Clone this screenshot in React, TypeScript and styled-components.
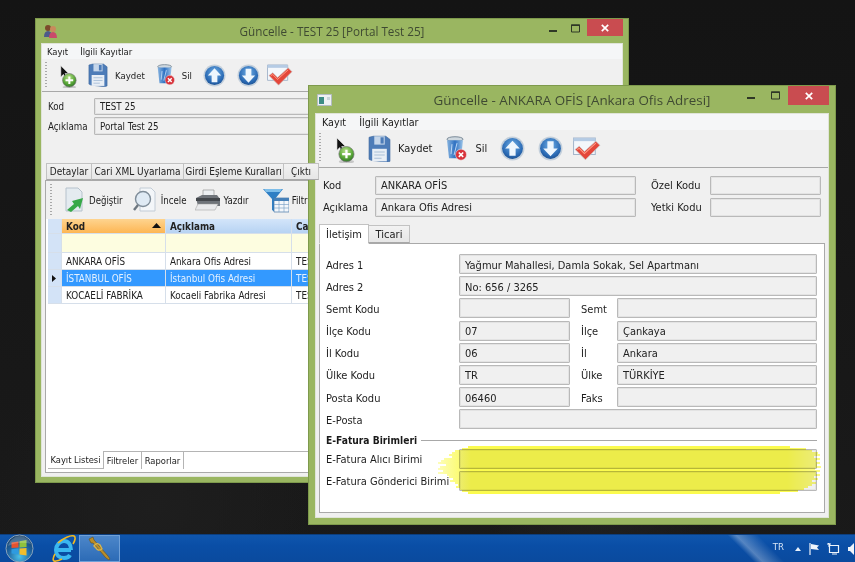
import React from "react";
import styled, { createGlobalStyle } from "styled-components";

const Global = createGlobalStyle`
  html, body { margin: 0; padding: 0; background: #151515; overflow: hidden; }
  * { box-sizing: border-box; }
  body { font-family: "DejaVu Sans Condensed", "DejaVu Sans", sans-serif; font-stretch: condensed; font-size: 11px; color: #1a1a1a; }
`;

const Desktop = styled.div`
  position: relative;
  width: 855px;
  height: 562px;
  overflow: hidden;
  background:
    radial-gradient(circle at 70% 85%, #232323 0, transparent 120px),
    radial-gradient(circle at 18% 90%, #1e1e1e 0, transparent 160px),
    linear-gradient(#141414, #1a1a1a);
  filter: blur(0.28px);
`;

const Frame = styled.div<{ $x: number; $y: number; $w: number; $h: number; $pad: number; $title: number }>`
  position: absolute;
  left: ${(p) => p.$x}px;
  top: ${(p) => p.$y}px;
  width: ${(p) => p.$w}px;
  height: ${(p) => p.$h}px;
  background: #9ab661;
  border: 1px solid #7e9a4c;
  padding: 0 ${(p) => p.$pad}px ${(p) => p.$pad}px;
  display: grid;
  grid-template-rows: ${(p) => p.$title}px 1fr;
`;

const TitleBar = styled.div<{ $size: number }>`
  position: relative;
  display: flex;
  align-items: center;
  justify-content: center;
  font-family: "Open Sans", "Noto Sans", sans-serif;
  font-stretch: normal;
  font-size: ${(p) => p.$size}px;
  color: #3f4a32;
`;

const TitleIcon = styled.span<{ $left: number }>`
  position: absolute;
  left: ${(p) => p.$left}px;
  top: 50%;
  transform: translateY(-50%);
  display: flex;
`;

const Controls = styled.div`
  position: absolute;
  right: 0;
  top: 0;
  display: flex;
  align-items: flex-start;
`;

const ControlGlyph = styled.span<{ $w: number; $low?: boolean }>`
  width: ${(p) => p.$w}px;
  height: 19px;
  padding-top: ${(p) => (p.$low ? 5 : 0)}px;
  display: flex;
  align-items: center;
  justify-content: center;
`;

const Close = styled.span<{ $w: number; $h: number }>`
  width: ${(p) => p.$w}px;
  height: ${(p) => p.$h}px;
  background: #c94c50;
  display: flex;
  align-items: center;
  justify-content: center;
`;

const Client = styled.div`
  background: #f0f0f0;
  border: 1px solid #dfe4d8;
  display: flex;
  flex-direction: column;
  min-height: 0;
  overflow: hidden;
`;

const MenuBar = styled.div<{ $h: number; $size: number; $left: number; $gap: number }>`
  height: ${(p) => p.$h}px;
  flex: none;
  background: #f5f6f7;
  display: flex;
  align-items: center;
  gap: ${(p) => p.$gap}px;
  padding-left: ${(p) => p.$left}px;
  font-size: ${(p) => p.$size}px;
`;

const Toolbar = styled.div<{ $h: number; $size: number; $line?: boolean }>`
  position: relative;
  height: ${(p) => p.$h}px;
  flex: none;
  display: flex;
  align-items: center;
  font-size: ${(p) => p.$size}px;
  background: #f0f0f0;
  border-bottom: ${(p) => (p.$line ? "1px solid #a8a8a8" : "none")};
`;

const Grip = styled.span<{ $left: number }>`
  position: absolute;
  left: ${(p) => p.$left}px;
  top: 3px;
  bottom: 4px;
  width: 2px;
  background-image: linear-gradient(#a9a9a9 1px, transparent 1px);
  background-size: 2px 3px;
`;

const Tool = styled.span<{ $ml: number; $mt?: number }>`
  display: inline-flex;
  flex: none;
  align-items: center;
  margin-left: ${(p) => p.$ml}px;
  margin-top: ${(p) => p.$mt ?? 0}px;
`;

const ToolLabel = styled.span<{ $ml: number }>`
  flex: none;
  margin-left: ${(p) => p.$ml}px;
  color: #222;
`;

const FormBlock = styled.div<{ $pt: number; $pl: number; $gap: number; $cols: string; $size: number }>`
  flex: none;
  display: grid;
  grid-template-columns: ${(p) => p.$cols};
  row-gap: ${(p) => p.$gap}px;
  align-items: center;
  padding: ${(p) => p.$pt}px 8px 0 ${(p) => p.$pl}px;
  font-size: ${(p) => p.$size}px;
`;

const Label = styled.span<{ $strong?: boolean }>`
  white-space: nowrap;
  color: #1d1d1d;
  font-weight: ${(p) => (p.$strong ? 700 : 400)};
`;

const Field = styled.div<{ $h: number; $span?: number }>`
  height: ${(p) => p.$h}px;
  grid-column: span ${(p) => p.$span ?? 1};
  background: #f0f0f0;
  border: 1px solid #b9b9b9;
  box-shadow: inset 0 0 0 1px #e3e3e3;
  border-radius: 1px;
  display: flex;
  align-items: center;
  padding-left: 5px;
  color: #222;
  white-space: nowrap;
  overflow: hidden;
`;

const TabStrip = styled.div<{ $mt: number; $ml: number; $h: number; $size: number }>`
  flex: none;
  display: flex;
  align-items: flex-end;
  margin: ${(p) => p.$mt}px 0 0 ${(p) => p.$ml}px;
  height: ${(p) => p.$h}px;
  font-size: ${(p) => p.$size}px;
  position: relative;
  z-index: 1;
`;

const Tab = styled.span<{ $w: number; $active?: boolean }>`
  width: ${(p) => p.$w}px;
  flex: none;
  height: ${(p) => (p.$active ? "100%" : "calc(100% - 2px)")};
  display: flex;
  align-items: center;
  justify-content: center;
  white-space: nowrap;
  overflow: hidden;
  border: 1px solid #c2c2c2;
  border-bottom: ${(p) => (p.$active ? "1px solid #fff" : "1px solid #a8a8a8")};
  margin-right: -1px;
  background: ${(p) => (p.$active ? "#fff" : "linear-gradient(#f2f2f2, #e6e6e6)")};
  margin-bottom: ${(p) => (p.$active ? "-1px" : "0")};
  color: #222;
`;

const Panel = styled.div<{ $mx: number; $mb: number }>`
  flex: 1;
  min-height: 0;
  margin: 0 ${(p) => p.$mx}px ${(p) => p.$mb}px;
  background: #fff;
  border: 1px solid #a9a9a9;
  display: flex;
  flex-direction: column;
`;

const GridTable = styled.div`
  flex: none;
  margin-left: 2px;
  display: grid;
  grid-template-columns: 14px 104px 126px 1fr;
  font-size: 9.800px;
`;

const Cell = styled.div<{ $kind?: "head" | "sorted" | "filter" | "sel" | "gutter" | "plain"; $h: number }>`
  height: ${(p) => p.$h}px;
  display: flex;
  align-items: center;
  justify-content: space-between;
  padding: 0 4px;
  white-space: nowrap;
  overflow: hidden;
  border-right: 1px solid #d6dfea;
  border-bottom: 1px solid #d6dfea;
  font-weight: ${(p) => (p.$kind === "head" || p.$kind === "sorted" ? 700 : 400)};
  color: ${(p) => (p.$kind === "sel" ? "#e4f1ff" : "#222")};
  background: ${(p) =>
    p.$kind === "head"
      ? "linear-gradient(#d3e5fa, #b7d3f3)"
      : p.$kind === "sorted"
      ? "linear-gradient(#fed48f, #fdb654)"
      : p.$kind === "filter"
      ? "#fdfde0"
      : p.$kind === "sel"
      ? "#3399ff"
      : p.$kind === "gutter"
      ? "#d3e3f7"
      : "#fff"};
`;

const Spacer = styled.div`
  flex: 1;
`;

const BottomTabs = styled.div`
  flex: none;
  height: 18px;
  display: flex;
  font-size: 9.300px;
  border-top: 1px solid #b4b4b4;
  margin: 0 0 3px 2px;
`;

const BottomTab = styled.span<{ $w: number; $active?: boolean }>`
  width: ${(p) => p.$w}px;
  flex: none;
  display: flex;
  align-items: center;
  justify-content: center;
  white-space: nowrap;
  background: #fff;
  margin-top: ${(p) => (p.$active ? "-1px" : "0")};
  border-right: 1px solid #b4b4b4;
  border-bottom: ${(p) => (p.$active ? "1px solid #b4b4b4" : "none")};
`;

const DetailGrid = styled.div`
  display: grid;
  grid-template-columns: 133px 111px 36px 200px;
  padding: 10px 0 0 6px;
  font-size: 11px;
  row-gap: 2.200px;
  align-items: center;

  & > * {
    padding-top: 2px;
  }
`;

const SecondLabel = styled(Label)<{ $pl: number }>`
  padding-left: ${(p) => p.$pl}px;
  margin-right: -${(p) => p.$pl}px;
`;

const NarrowField = styled(Field)`
  width: 111px;
`;

const RightField = styled(Field)`
  margin-left: 11px;
  width: 200px;
`;

const WideField = styled(Field)`
  grid-column: span 3;
  width: 358px;
`;

const SectionTitle = styled.div`
  grid-column: span 4;
  display: flex;
  align-items: center;
  gap: 4px;
  font-size: 10.200px;
  font-weight: 700;
  height: 15px;
  width: 491px;

  &::after {
    content: "";
    flex: 1;
    height: 1px;
    background: #a8a8a8;
  }
`;

const Highlight = styled.svg`
  position: absolute;
  left: 436px;
  top: 446px;
  mix-blend-mode: multiply;
  pointer-events: none;
`;

const Taskbar = styled.div`
  position: absolute;
  left: 0;
  right: 0;
  bottom: 0;
  height: 28px;
  display: flex;
  align-items: center;
  background:
    linear-gradient(45deg, transparent 0 85.500%, rgba(255,255,255,.3) 86.500%, rgba(255,255,255,0) 89%, transparent 100%),
    linear-gradient(#0f56ad, #0a4ea6 40%, #0a4a9e);
  border-top: 1px solid #0c3e7e;
`;

const StartSlot = styled.span`
  width: 38px;
  display: flex;
  justify-content: center;
  flex: none;
`;

const TaskSlot = styled.span<{ $active?: boolean }>`
  width: ${(p) => (p.$active ? 41 : 30)}px;
  height: 27px;
  flex: none;
  display: flex;
  align-items: center;
  justify-content: center;
  margin-left: ${(p) => (p.$active ? 0 : 11)}px;
  background: ${(p) => (p.$active ? "linear-gradient(#4c86c9, #2c6bb6)" : "transparent")};
  border: ${(p) => (p.$active ? "1px solid #6fa0d8" : "none")};
`;

const Tray = styled.div`
  margin-left: auto;
  display: flex;
  align-items: center;
  gap: 8px;
  color: #d7e5f6;
  font-size: 9.500px;
  height: 100%;
`;

const TrayLang = styled.span`
  margin-right: 3px;
  margin-top: -4px;
`;

/* ---------- icons ---------- */
const Add = ({ s }: { s: number }) => (
  <svg width={s} height={s * 1.4} viewBox="0 0 20 28">
    <defs>
      <radialGradient id="ga" cx=".45" cy=".3" r=".75">
        <stop offset="0" stopColor="#b8e08a" />
        <stop offset=".6" stopColor="#5aa838" />
        <stop offset="1" stopColor="#2c6e26" />
      </radialGradient>
    </defs>
    <path d="M1 1v13l3-3 2 5 2-1-2-5h4z" fill="#111" stroke="#eee" strokeWidth=".6" />
    <ellipse cx="11" cy="26" rx="8" ry="2" fill="#888" opacity=".4" />
    <circle cx="11" cy="18" r="8" fill="url(#ga)" stroke="#777" strokeWidth=".7" />
    <path d="M11 13.500v9M6.500 18h9" stroke="#fff" strokeWidth="2.400" />
  </svg>
);
const Save = ({ s }: { s: number }) => (
  <svg width={s} height={s * 1.2} viewBox="0 0 22 26">
    <path d="M1 2l4-1h12l4 3v21l-3 1L3 24 1 23z" fill="#4d7cb8" stroke="#3b659c" strokeWidth=".6" />
    <path d="M6 1h10v8H6z" fill="#c5d6ea" />
    <path d="M12 2h3v6h-3z" fill="#4d7cb8" />
    <path d="M4 13h14v12H4z" fill="#e8eef5" />
    <path d="M6 16h10M6 19h10M6 22h7" stroke="#a9bfd8" strokeWidth="1" />
  </svg>
);
const Trash = ({ s }: { s: number }) => (
  <svg width={s} height={s * 1.15} viewBox="0 0 22 25">
    <defs>
      <linearGradient id="gt" x1="0" x2="1">
        <stop offset="0" stopColor="#88b4df" />
        <stop offset=".5" stopColor="#2f71c2" />
        <stop offset="1" stopColor="#9cc4e8" />
      </linearGradient>
    </defs>
    <ellipse cx="10" cy="3" rx="8" ry="2.400" fill="#cfd8df" stroke="#7a8a98" />
    <path d="M2 4l2 18h12l2-18z" fill="url(#gt)" />
    <path d="M7 8l-1 10M12 7l-3 12" stroke="#d7ebff" strokeWidth="1" opacity=".8" />
    <circle cx="16" cy="18.500" r="5.500" fill="#d8333b" stroke="#eee" strokeWidth=".5" />
    <path d="M13.800 16.300l4.400 4.400M18.200 16.300l-4.400 4.400" stroke="#fff" strokeWidth="1.600" />
  </svg>
);
const Arrow = ({ s, up }: { s: number; up?: boolean }) => (
  <svg width={s} height={s} viewBox="0 0 24 24">
    <defs>
      <radialGradient id="gr" cx=".5" cy=".35" r=".7">
        <stop offset="0" stopColor="#6faee6" />
        <stop offset=".7" stopColor="#2a6ab4" />
        <stop offset="1" stopColor="#1b4d8c" />
      </radialGradient>
    </defs>
    <circle cx="12" cy="12" r="11.500" fill="#c3cfdb" />
    <circle cx="12" cy="12" r="10" fill="url(#gr)" />
    <path
      d={up ? "M12 4.500l7 7.500h-4v7H9v-7H5z" : "M12 19.500l7-7.500h-4V5H9v7H5z"}
      fill="#eef6fd"
    />
  </svg>
);
const Check = ({ s }: { s: number }) => (
  <svg width={s} height={s * 0.85} viewBox="0 0 27 23">
    <path d="M0.500 1h21v16h-21z" fill="#f4f7fb" stroke="#a5b6cb" />
    <path d="M0.500 1h21v3h-21z" fill="#b5cbe4" />
    <path d="M2 12l4-3 5 5L22 4l4 4-14 14z" fill="#e4463a" stroke="#c9c9c9" strokeWidth=".7" />
    <path d="M4 12l2-1 5 5L22 6" stroke="#ff9d86" strokeWidth="1" fill="none" />
  </svg>
);
const Edit = () => (
  <svg width="19" height="26" viewBox="0 0 19 26">
    <path d="M1 1h12l4 4v19H1z" fill="#e4ebf0" stroke="#b6c2cc" />
    <path d="M2 23l7-6-2-3 11-3-3 11-2-3-7 6z" fill="#37a848" />
  </svg>
);
const Inspect = () => (
  <svg width="23" height="26" viewBox="0 0 23 26">
    <path d="M7 1h11l4 4v19H7z" fill="#f3f6f9" stroke="#c2ccd6" />
    <circle cx="10" cy="12" r="7.500" fill="#dfeaf4" stroke="#7f8d99" strokeWidth="1.400" />
    <path d="M5 18l-4 5" stroke="#6d7780" strokeWidth="2.400" />
  </svg>
);
const Printer = () => (
  <svg width="26" height="22" viewBox="0 0 26 22">
    <path d="M8 1h11v7H8z" fill="#eceff2" stroke="#888" strokeWidth=".6" />
    <path d="M1 9l6-3h15l3 4v7H3z" fill="#6f747a" />
    <path d="M1 9h24v3H1z" fill="#43474c" />
    <path d="M3 15h20l-3 6H0z" fill="#e9eaec" stroke="#999" strokeWidth=".5" />
  </svg>
);
const Funnel = () => (
  <svg width="26" height="25" viewBox="0 0 26 25">
    <path d="M0 1h20l-8 10v13l-3-2V11z" fill="#2f7fc4" />
    <path d="M1 1h18l-2 3H3z" fill="#7dbde9" />
    <path d="M11 10h15v14H11z" fill="#f4f7fb" stroke="#4676a8" strokeWidth=".7" />
    <path d="M11 10h15v3H11z" fill="#4680b8" />
    <path d="M11 16.500h15M11 20h15M16 13v11M21 13v11" stroke="#7fa3c8" strokeWidth=".7" />
  </svg>
);
const People = () => (
  <svg width="15" height="14" viewBox="0 0 15 14">
    <circle cx="5" cy="4" r="3" fill="#7c4a2c" />
    <path d="M1 13c0-4 1.500-6 4-6s4 2 4 6z" fill="#4d5a8a" />
    <circle cx="10" cy="5" r="3" fill="#c88a5c" />
    <path d="M6 14c0-4 1.500-6 4-6s4 2 4 6z" fill="#c94a6a" />
  </svg>
);
const WinIcon = () => (
  <svg width="15" height="12" viewBox="0 0 15 12">
    <path d="M.5.5h14v11H.5z" fill="#eef1f4" stroke="#b4bcc4" />
    <path d="M2 3h5v7H2z" fill="#3d8c84" />
    <path d="M10 3h3v3h-3z" fill="#c9d4dc" />
  </svg>
);
const MinGlyph = () => (
  <svg width="8" height="2" viewBox="0 0 8 2"><path d="M0 0h8v2H0z" fill="#2f3826" /></svg>
);
const MaxGlyph = () => (
  <svg width="10" height="9" viewBox="0 0 10 9">
    <path d="M.5 1h8v7h-8z" fill="none" stroke="#2f3826" />
    <path d="M0 .5h9v1.500H0z" fill="#2f3826" />
  </svg>
);
const CloseGlyph = () => (
  <svg width="8" height="8" viewBox="0 0 8 8">
    <path d="M.8.8l6.400 6.400M7.200.8L.8 7.200" stroke="#fff" strokeWidth="1.700" />
  </svg>
);
const Orb = () => (
  <svg width="29" height="29" viewBox="0 0 29 29">
    <defs>
      <radialGradient id="go" cx=".5" cy=".8" r=".85">
        <stop offset="0" stopColor="#4cc0e8" />
        <stop offset=".55" stopColor="#1c5f9c" />
        <stop offset="1" stopColor="#1c3a58" />
      </radialGradient>
    </defs>
    <circle cx="14.500" cy="14.500" r="13.500" fill="url(#go)" stroke="#8aa4bc" />
    <path d="M6.500 8.500l7-1v6l-7 .6z" fill="#e5522f" />
    <path d="M14.500 7.300l7-1.300v7l-7 .6z" fill="#8fc23d" />
    <path d="M6.500 15.200l7-.6v6l-7-1z" fill="#2f9be0" />
    <path d="M14.500 14.500l7-.5v7.500l-7-1z" fill="#f2bd2b" />
    <path d="M3 12c2-7 8-10 12-10s9 3 11 8c-7-2-15-2-23 2z" fill="#fff" opacity=".2" />
  </svg>
);
const IE = () => (
  <svg width="24" height="27" viewBox="0 0 24 27">
    <path d="M6 15h13M19 15c0-6-3-9-7-9s-8 4-8 9 3 8 8 8c3 0 5-1 6-3" fill="none" stroke="#3ab7f0" strokeWidth="4" />
    <path d="M6 8C11 3 19 0 22 1c2 1 1 5-1 8M3 19c-3 5-2 8 1 7 2 0 4-1 6-2" fill="none" stroke="#f2b820" strokeWidth="1.600" />
  </svg>
);
const Trumpet = () => (
  <svg width="24" height="26" viewBox="0 0 24 26">
    <path d="M1 3l4-2 1 3 14 16 2 3-1 1-3-2L5 7 3 7z" fill="#b88d2a" stroke="#6a4f12" strokeWidth=".6" />
    <path d="M6 10c2-3 4-3 6-1l2 4c-3 2-5 1-6-1z" fill="none" stroke="#d9b44a" strokeWidth="1.400" />
  </svg>
);
const Caret = () => (
  <svg width="9" height="6" viewBox="0 0 9 6"><path d="M4.500 0l4.500 5H0z" fill="#111" /></svg>
);
const RowMark = () => (
  <svg width="5" height="7" viewBox="0 0 5 7"><path d="M0 0l4 3.500L0 7z" fill="#111" /></svg>
);
const TrayCaret = () => (
  <svg width="6" height="4" viewBox="0 0 6 4"><path d="M3 0l3 4H0z" fill="#e8f1fb" /></svg>
);
const TrayFlag = () => (
  <svg width="10" height="12" viewBox="0 0 10 12">
    <path d="M1 0v12" stroke="#eef4fb" strokeWidth="1.200" />
    <path d="M2 1l8 1.500-2 2 2 2.500-8-1z" fill="#eef4fb" />
  </svg>
);
const TrayNet = () => (
  <svg width="13" height="12" viewBox="0 0 13 12">
    <path d="M2.500 2.500h9v7h-9z" fill="none" stroke="#eef4fb" strokeWidth="1.200" />
    <path d="M0 1h4M5 11h5" stroke="#eef4fb" strokeWidth="1.200" />
    <path d="M1 0l2 2M2 0v4" stroke="#eef4fb" />
  </svg>
);
const TraySound = () => (
  <svg width="7" height="12" viewBox="0 0 7 12">
    <path d="M0 4h2l4-4v12L2 8H0z" fill="#eef4fb" />
  </svg>
);

const lefts = [468, 462, 455, 452, 449, 452, 444, 441, 438, 446, 440, 438, 443, 438, 447, 449, 453, 450, 455, 458, 456, 460, 462, 468];
const rights = [790, 806, 812, 818, 820, 814, 820, 816, 820, 817, 821, 815, 820, 816, 820, 814, 818, 812, 816, 812, 808, 804, 798, 780];

const App = () => (
  <Desktop>
    <Global />

    <Frame $x={35} $y={18} $w={594} $h={465} $pad={5} $title={24}>
      <TitleBar $size={11.7}>
        <TitleIcon $left={2}><People /></TitleIcon>
        Güncelle - TEST 25 [Portal Test 25]
        <Controls>
          <ControlGlyph $w={23} $low><MinGlyph /></ControlGlyph>
          <ControlGlyph $w={23}><MaxGlyph /></ControlGlyph>
          <Close $w={36} $h={17}><CloseGlyph /></Close>
        </Controls>
      </TitleBar>
      <Client>
        <MenuBar $h={15} $size={9.4} $left={5} $gap={12}>
          <span>Kayıt</span>
          <span>İlgili Kayıtlar</span>
        </MenuBar>
        <Toolbar $h={33} $size={9.5} $line>
          <Grip $left={3} />
          <Tool $ml={18} $mt={3}><Add s={17} /></Tool>
          <Tool $ml={11}><Save s={20} /></Tool>
          <ToolLabel $ml={7}>Kaydet</ToolLabel>
          <Tool $ml={11}><Trash s={19} /></Tool>
          <ToolLabel $ml={7}>Sil</ToolLabel>
          <Tool $ml={11}><Arrow s={23} up /></Tool>
          <Tool $ml={11}><Arrow s={23} /></Tool>
          <Tool $ml={7}><Check s={26} /></Tool>
        </Toolbar>
        <FormBlock $pt={6} $pl={6} $gap={2} $cols="46px 1fr" $size={9.7}>
          <Label>Kod</Label>
          <Field $h={17}>TEST 25</Field>
          <Label>Açıklama</Label>
          <Field $h={18}>Portal Test 25</Field>
        </FormBlock>
        <TabStrip $mt={26} $ml={4} $h={19} $size={10}>
          <Tab $w={46}>Detaylar</Tab>
          <Tab $w={93}>Cari XML Uyarlama</Tab>
          <Tab $w={101}>Girdi Eşleme Kuralları</Tab>
          <Tab $w={36}>Çıktı</Tab>
        </TabStrip>
        <Panel $mx={3} $mb={3}>
          <Toolbar $h={38} $size={9.6}>
            <Grip $left={4} />
            <Tool $ml={19}><Edit /></Tool>
            <ToolLabel $ml={5}>Değiştir</ToolLabel>
            <Tool $ml={10}><Inspect /></Tool>
            <ToolLabel $ml={5}>İncele</ToolLabel>
            <Tool $ml={9}><Printer /></Tool>
            <ToolLabel $ml={2}>Yazdır</ToolLabel>
            <Tool $ml={14}><Funnel /></Tool>
            <ToolLabel $ml={3}>Filtrele</ToolLabel>
          </Toolbar>
          <GridTable>
            <Cell $kind="gutter" $h={15} />
            <Cell $kind="sorted" $h={15}>Kod<Caret /></Cell>
            <Cell $kind="head" $h={15}>Açıklama</Cell>
            <Cell $kind="head" $h={15}>Cari</Cell>
            <Cell $kind="gutter" $h={19} />
            <Cell $kind="filter" $h={19} />
            <Cell $kind="filter" $h={19} />
            <Cell $kind="filter" $h={19} />
            <Cell $kind="gutter" $h={17} />
            <Cell $kind="plain" $h={17}>ANKARA OFİS</Cell>
            <Cell $kind="plain" $h={17}>Ankara Ofis Adresi</Cell>
            <Cell $kind="plain" $h={17}>TEST 25</Cell>
            <Cell $kind="gutter" $h={17}><RowMark /></Cell>
            <Cell $kind="sel" $h={17}>İSTANBUL OFİS</Cell>
            <Cell $kind="sel" $h={17}>İstanbul Ofis Adresi</Cell>
            <Cell $kind="sel" $h={17}>TEST 25</Cell>
            <Cell $kind="gutter" $h={17} />
            <Cell $kind="plain" $h={17}>KOCAELİ FABRİKA</Cell>
            <Cell $kind="plain" $h={17}>Kocaeli Fabrika Adresi</Cell>
            <Cell $kind="plain" $h={17}>TEST 25</Cell>
          </GridTable>
          <Spacer />
          <BottomTabs>
            <BottomTab $w={56} $active>Kayıt Listesi</BottomTab>
            <BottomTab $w={38}>Filtreler</BottomTab>
            <BottomTab $w={42}>Raporlar</BottomTab>
          </BottomTabs>
        </Panel>
      </Client>
    </Frame>

    <Frame $x={308} $y={85} $w={528} $h={440} $pad={6} $title={27}>
      <TitleBar $size={13.4}>
        <TitleIcon $left={2}><WinIcon /></TitleIcon>
        Güncelle - ANKARA OFİS [Ankara Ofis Adresi]
        <Controls>
          <ControlGlyph $w={25} $low><MinGlyph /></ControlGlyph>
          <ControlGlyph $w={25}><MaxGlyph /></ControlGlyph>
          <Close $w={41} $h={19}><CloseGlyph /></Close>
        </Controls>
      </TitleBar>
      <Client>
        <MenuBar $h={16} $size={10.7} $left={6} $gap={13}>
          <span>Kayıt</span>
          <span>İlgili Kayıtlar</span>
        </MenuBar>
        <Toolbar $h={38} $size={11} $line>
          <Grip $left={3} />
          <Tool $ml={20} $mt={3}><Add s={19} /></Tool>
          <Tool $ml={13}><Save s={23} /></Tool>
          <ToolLabel $ml={7}>Kaydet</ToolLabel>
          <Tool $ml={13}><Trash s={22} /></Tool>
          <ToolLabel $ml={8}>Sil</ToolLabel>
          <Tool $ml={13}><Arrow s={25} up /></Tool>
          <Tool $ml={13}><Arrow s={25} /></Tool>
          <Tool $ml={10}><Check s={28} /></Tool>
        </Toolbar>
        <FormBlock $pt={8} $pl={7} $gap={3} $cols="52px 261px 74px 111px" $size={11}>
          <Label>Kod</Label>
          <Field $h={19}>ANKARA OFİS</Field>
          <SecondLabel $pl={15}>Özel Kodu</SecondLabel>
          <Field $h={19} />
          <Label>Açıklama</Label>
          <Field $h={19}>Ankara Ofis Adresi</Field>
          <SecondLabel $pl={15}>Yetki Kodu</SecondLabel>
          <Field $h={19} />
        </FormBlock>
        <TabStrip $mt={6} $ml={3} $h={20} $size={11}>
          <Tab $w={50} $active>İletişim</Tab>
          <Tab $w={42}>Ticari</Tab>
        </TabStrip>
        <Panel $mx={3} $mb={4}>
          <DetailGrid>
            <Label>Adres 1</Label>
            <WideField $h={20}>Yağmur Mahallesi, Damla Sokak, Sel Apartmanı</WideField>
            <Label>Adres 2</Label>
            <WideField $h={20}>No: 656 / 3265</WideField>
            <Label>Semt Kodu</Label>
            <NarrowField $h={20} />
            <SecondLabel $pl={11}>Semt</SecondLabel>
            <RightField $h={20} />
            <Label>İlçe Kodu</Label>
            <NarrowField $h={20}>07</NarrowField>
            <SecondLabel $pl={11}>İlçe</SecondLabel>
            <RightField $h={20}>Çankaya</RightField>
            <Label>İl Kodu</Label>
            <NarrowField $h={20}>06</NarrowField>
            <SecondLabel $pl={11}>İl</SecondLabel>
            <RightField $h={20}>Ankara</RightField>
            <Label>Ülke Kodu</Label>
            <NarrowField $h={20}>TR</NarrowField>
            <SecondLabel $pl={11}>Ülke</SecondLabel>
            <RightField $h={20}>TÜRKİYE</RightField>
            <Label>Posta Kodu</Label>
            <NarrowField $h={20}>06460</NarrowField>
            <SecondLabel $pl={11}>Faks</SecondLabel>
            <RightField $h={20} />
            <Label>E-Posta</Label>
            <WideField $h={20} />
            <SectionTitle>E-Fatura Birimleri</SectionTitle>
            <Label>E-Fatura Alıcı Birimi</Label>
            <WideField $h={20} />
            <Label>E-Fatura Gönderici Birimi</Label>
            <WideField $h={20} />
          </DetailGrid>
        </Panel>
      </Client>
    </Frame>

    <Highlight width="390" height="48" viewBox="436 446 390 48">
      <defs>
        <linearGradient id="hl" gradientUnits="userSpaceOnUse" x1="436" x2="826" y1="0" y2="0">
          <stop offset="0" stopColor="#fdfdc0" />
          <stop offset=".09" stopColor="#fbfb4e" />
          <stop offset=".9" stopColor="#fbfb4e" />
          <stop offset="1" stopColor="#fbfb90" />
        </linearGradient>
      </defs>
      {lefts.map((l, i) => (
        <rect key={i} x={l} y={446 + i * 2} width={rights[i] - l} height="2" fill="url(#hl)" />
      ))}
    </Highlight>

    <Taskbar>
      <StartSlot><Orb /></StartSlot>
      <TaskSlot><IE /></TaskSlot>
      <TaskSlot $active><Trumpet /></TaskSlot>
      <Tray>
        <TrayLang>TR</TrayLang>
        <TrayCaret />
        <TrayFlag />
        <TrayNet />
        <TraySound />
      </Tray>
    </Taskbar>
  </Desktop>
);

export default App;
